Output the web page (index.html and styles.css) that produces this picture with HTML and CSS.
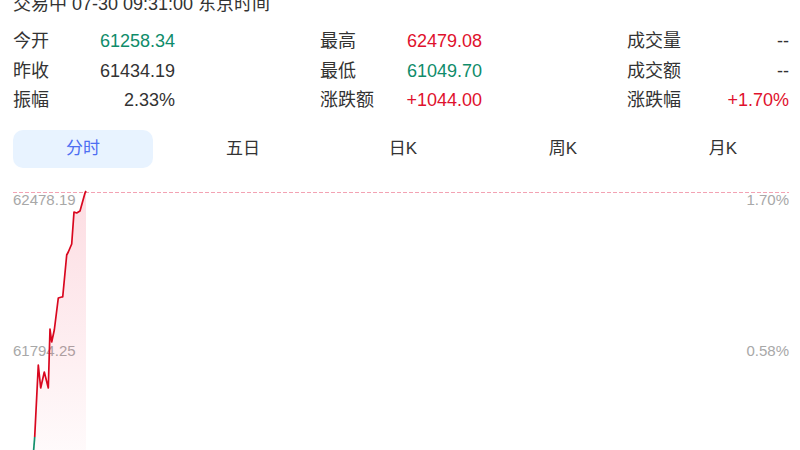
FILE: index.html
```html
<!DOCTYPE html>
<html lang="zh-CN">
<head>
<meta charset="utf-8">
<link rel="stylesheet" href="styles.css">
</head>
<body>
<div class="page">
  <div class="status">交易中 07-30 09:31:00 东京时间</div>
  <div class="stats">
    <div class="col">
      <div class="item"><span class="lbl">今开</span><span class="val green">61258.34</span></div>
      <div class="item"><span class="lbl">昨收</span><span class="val">61434.19</span></div>
      <div class="item"><span class="lbl">振幅</span><span class="val">2.33%</span></div>
    </div>
    <div class="col">
      <div class="item"><span class="lbl">最高</span><span class="val red">62479.08</span></div>
      <div class="item"><span class="lbl">最低</span><span class="val green">61049.70</span></div>
      <div class="item"><span class="lbl">涨跌额</span><span class="val red">+1044.00</span></div>
    </div>
    <div class="col">
      <div class="item"><span class="lbl">成交量</span><span class="val">--</span></div>
      <div class="item"><span class="lbl">成交额</span><span class="val">--</span></div>
      <div class="item"><span class="lbl">涨跌幅</span><span class="val red">+1.70%</span></div>
    </div>
  </div>
  <div class="tabs">
    <div class="tab active">分时</div>
    <div class="tab">五日</div>
    <div class="tab">日K</div>
    <div class="tab">周K</div>
    <div class="tab">月K</div>
  </div>
  <div class="chart">
    <div class="axis">
      <div class="axis-row"><span>62478.19</span><span>1.70%</span></div>
      <div class="axis-row mid"><span>61794.25</span><span>0.58%</span></div>
    </div>
    <svg class="plot" width="776" height="262" viewBox="0 0 776 262">
      <defs>
        <linearGradient id="fill" x1="0" y1="0" x2="0" y2="1">
          <stop offset="0" stop-color="#f0284a" stop-opacity="0.16"/>
          <stop offset="1" stop-color="#f0284a" stop-opacity="0.02"/>
        </linearGradient>
      </defs>
      <line x1="0" y1="4.5" x2="776" y2="4.5" stroke="#f3a2b3" stroke-width="1" stroke-dasharray="4 2"/>
      <polygon fill="url(#fill)" points="20,270 21.7,249 25.3,177 27.7,200 31.3,184 35.3,200 37,141 38.7,154 41.3,142 45.3,110 48.7,109 49.7,109 53.7,67 55.3,64 58.7,56 61,24 63.7,25 67,23 72,5 73,3 73,270"/>
      <polyline fill="none" stroke="#13906c" stroke-width="1.7" points="20,270 21.7,249"/>
      <polyline fill="none" stroke="#d9071f" stroke-width="1.7" stroke-linejoin="round" points="21.7,249 25.3,177 27.7,200 31.3,184 35.3,200 37,141 38.7,154 41.3,142 45.3,110 48.7,109 49.7,109 53.7,67 55.3,64 58.7,56 61,24 63.7,25 67,23 72,5 73,3"/>
    </svg>
  </div>
</div>
</body>
</html>
```

FILE: styles.css
```css
html, body {
  margin: 0;
  padding: 0;
  background: #ffffff;
  overflow: hidden;
}
.page {
  width: 800px;
  height: 450px;
  box-sizing: border-box;
  padding: 0 11px 0 13px;
  font-family: "Liberation Sans", "Noto Sans CJK SC", sans-serif;
  color: #333333;
  overflow: hidden;
}
.status {
  font-size: 18px;
  line-height: 20px;
  margin-top: -6px;
  white-space: nowrap;
}
.stats {
  display: flex;
  justify-content: space-between;
  margin-top: 13px;
}
.col {
  width: 162px;
  display: flex;
  flex-direction: column;
}
.item {
  display: flex;
  justify-content: space-between;
  font-size: 18px;
  line-height: 29.5px;
}
.green { color: #0f8c6a; }
.red { color: #e0112d; }
.tabs {
  display: flex;
  gap: 20px;
  margin-top: 14px;
  margin-right: -4px;
}
.tab {
  flex: 0 0 140px;
  height: 38px;
  line-height: 38px;
  text-align: center;
  font-size: 17px;
  border-radius: 10px;
  color: #333333;
}
.tab.active {
  background: #e8f3ff;
  color: #4e6ef2;
}
.chart {
  margin-top: 20px;
  height: 262px;
  display: grid;
}
.axis, .plot {
  grid-area: 1 / 1;
}
.axis {
  display: flex;
  flex-direction: column;
  padding-top: 4px;
  font-size: 15px;
  line-height: 16px;
  color: #a8a8a8;
}
.axis-row {
  display: flex;
  justify-content: space-between;
}
.axis-row.mid {
  margin-top: 135px;
}
.plot {
  display: block;
}
```
